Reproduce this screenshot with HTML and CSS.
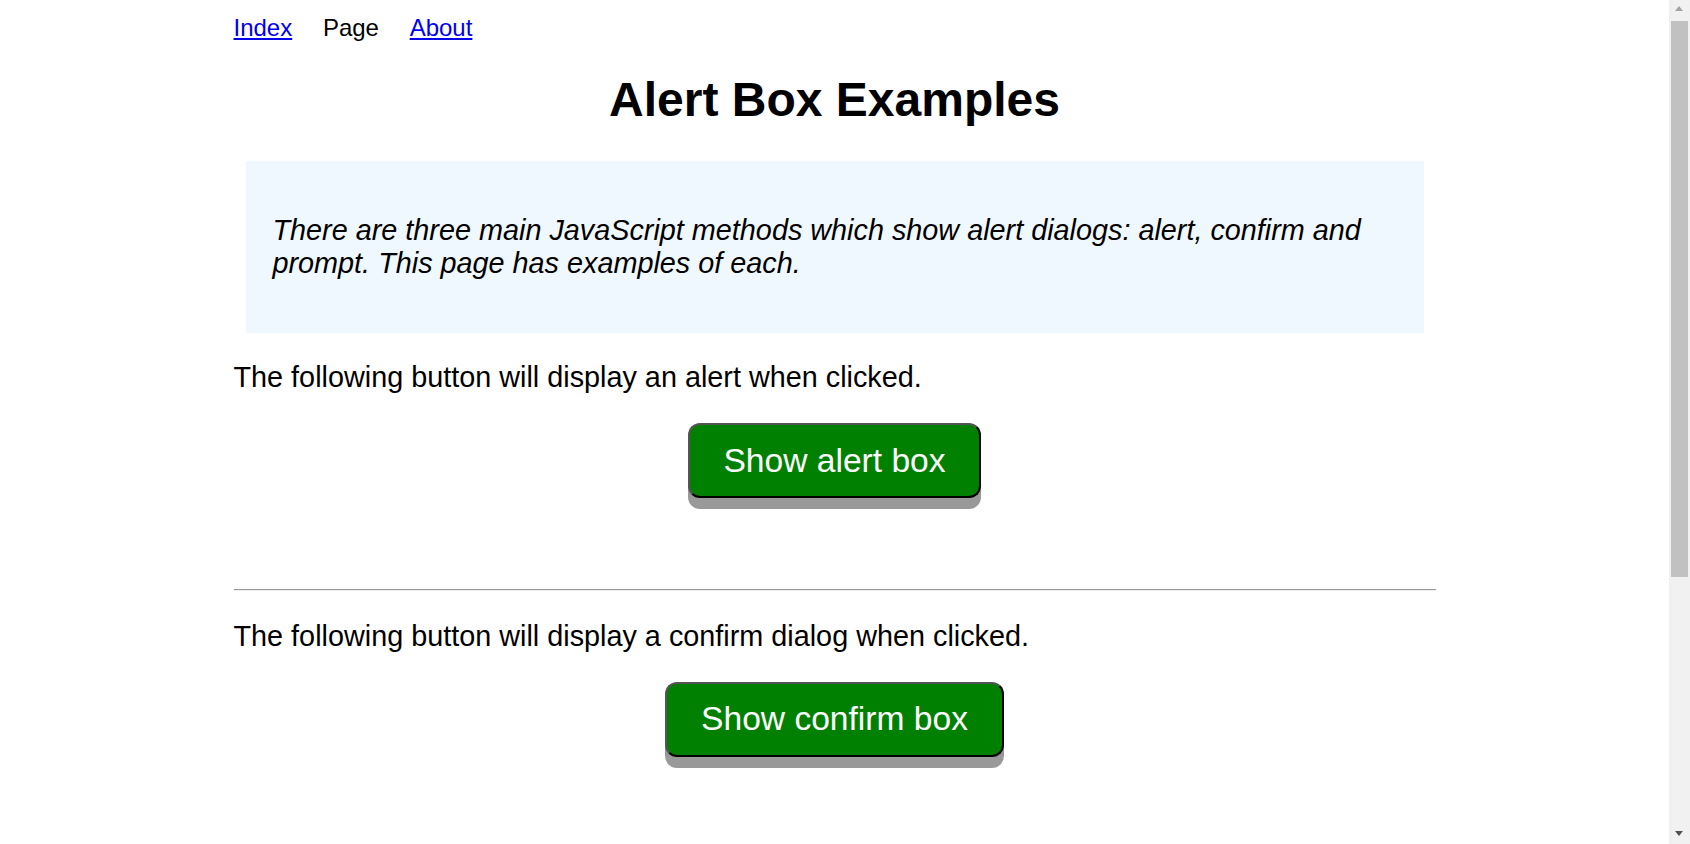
FILE: index.html
```html
<!DOCTYPE html>
<html lang="en">
<head>
<meta charset="utf-8">
<title>Alert Box Examples</title>
<link rel="stylesheet" href="styles.css">
</head>
<body>
<div class="page">
  <nav class="nav">
    <a href="#index">Index</a>
    <span class="current">Page</span>
    <a href="#about">About</a>
  </nav>

  <h1 class="title">Alert Box Examples</h1>

  <blockquote class="intro">
    <p>There are three main JavaScript methods which show alert dialogs: alert, confirm and prompt. This page has examples of each.</p>
  </blockquote>

  <section class="example">
    <p class="text">The following button will display an alert when clicked.</p>
    <div class="actions"><button class="btn" type="button" id="alertexamplebutton">Show alert box</button></div>
    <p class="result" id="alertexplanation">&nbsp;</p>
  </section>

  <hr class="rule">

  <section class="example">
    <p class="text">The following button will display a confirm dialog when clicked.</p>
    <div class="actions"><button class="btn" type="button" id="confirmexample">Show confirm box</button></div>
    <p class="result" id="confirmexplanation">&nbsp;</p>
  </section>

  <hr class="rule">

  <section class="example">
    <p class="text">The following button will display a prompt dialog when clicked.</p>
    <div class="actions"><button class="btn" type="button" id="promptexample">Show prompt box</button></div>
    <p class="result" id="promptexplanation">&nbsp;</p>
  </section>

  <hr class="rule">

  <section class="notes">
    <h2 class="subtitle">How the examples work</h2>
    <p class="text">The alert method shows a message and waits until the user presses OK.</p>
    <pre class="code">alert("I am an alert box!");</pre>
    <p class="text">The confirm method returns true when the user presses OK, and false when the user presses Cancel.</p>
    <pre class="code">if (confirm("Are you sure?")) {
  // the user pressed OK
}</pre>
    <p class="text">The prompt method returns the text that the user entered, or null when the dialog was cancelled.</p>
    <pre class="code">var name = prompt("What is your name?", "Bob");</pre>
  </section>
</div>

<div class="scrollbar" aria-hidden="true">
  <span class="arrow arrow-up"></span>
  <span class="thumb"></span>
  <span class="arrow arrow-down"></span>
</div>
</body>
</html>
```

FILE: styles.css
```css
html {
  font-size: 24px;
}

body {
  margin: 0;
  padding-right: 21px;
  background: #ffffff;
  color: #000000;
  font-family: "Liberation Sans", Arial, sans-serif;
  font-size: 24px;
}

.page {
  width: 1202px;
  margin: 0 auto;
  padding-top: 14px;
  padding-bottom: 60px;
}

.nav {
  display: flex;
  gap: 30.7px;
  font-size: 24px;
}

.nav a {
  color: #0000ee;
  text-decoration: underline;
}

.nav .current {
  color: #000000;
}

.title {
  margin: 30px 0 34px;
  font-size: 48px;
  font-weight: bold;
  text-align: center;
}

.intro {
  margin: 0 12px;
  padding: 24px 24px 24px 27px;
  background: #f0f8ff;
}

.intro p {
  margin: 28.8px 0;
  font-size: 28.8px;
  font-style: italic;
}

.text,
.result {
  margin: 28.8px 0;
  font-size: 28.8px;
}

.actions {
  display: flex;
  justify-content: center;
}

.btn {
  padding: 16.6px 33.6px;
  border: 2px solid;
  border-color: #545454 #000000 #000000 #545454;
  border-radius: 12px;
  background: #008000;
  color: #ffffff;
  font-family: "Liberation Sans", Arial, sans-serif;
  font-size: 33.6px;
  line-height: normal;
  box-shadow: 0 11px 0 #999999;
  cursor: pointer;
}

.rule {
  margin: 0;
  border: 0;
  border-top: 1px solid #9a9a9a;
  border-bottom: 1px solid #eeeeee;
}

.subtitle {
  margin: 28.8px 0;
  font-size: 36px;
  font-weight: bold;
}

.code {
  margin: 28.8px 12px;
  padding: 24px;
  background: #f0f0f0;
  font-family: "Liberation Mono", "Courier New", monospace;
  font-size: 24px;
  white-space: pre;
}

/* window scrollbar, drawn over the right edge */
.scrollbar {
  position: fixed;
  top: 0;
  right: 0;
  width: 21px;
  height: 100vh;
  background: #f1f1f1;
}

.thumb {
  position: absolute;
  top: 21px;
  left: 2px;
  width: 17px;
  height: 556px;
  background: #c1c1c1;
}

.arrow {
  position: absolute;
  left: 6px;
  width: 0;
  height: 0;
  border-left: 4.5px solid transparent;
  border-right: 4.5px solid transparent;
}

.arrow-up {
  top: 6px;
  border-bottom: 5px solid #a3a3a3;
}

.arrow-down {
  bottom: 8px;
  border-top: 5px solid #505050;
}
```
